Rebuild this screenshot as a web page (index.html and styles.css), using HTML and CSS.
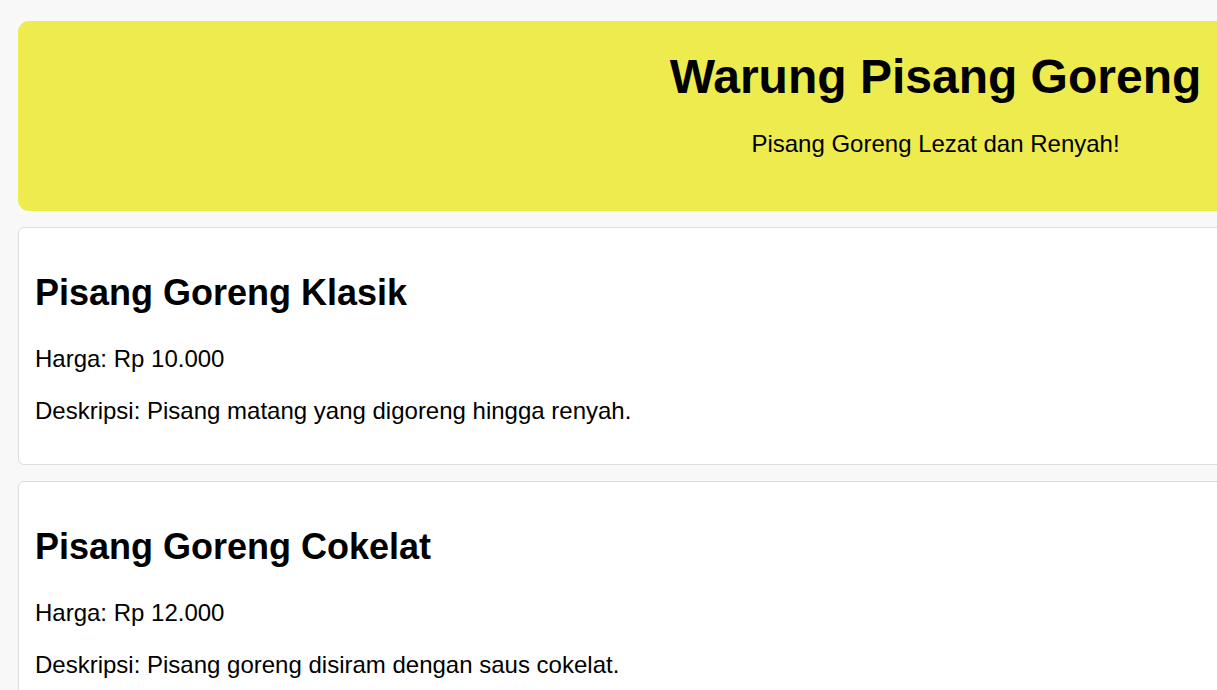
FILE: index.html
```html
<!DOCTYPE html>
<html lang="id">
<head>
<meta charset="utf-8">
<title>Warung Pisang Goreng</title>
<link rel="stylesheet" href="styles.css">
</head>
<body>
<div class="page">
  <header class="hero">
    <h1 class="hero-title">Warung Pisang Goreng</h1>
    <p class="hero-sub">Pisang Goreng Lezat dan Renyah!</p>
  </header>
  <section class="menu">
    <article class="card">
      <h2 class="card-title">Pisang Goreng Klasik</h2>
      <p class="card-text">Harga: Rp 10.000</p>
      <p class="card-text">Deskripsi: Pisang matang yang digoreng hingga renyah.</p>
    </article>
    <article class="card">
      <h2 class="card-title">Pisang Goreng Cokelat</h2>
      <p class="card-text">Harga: Rp 12.000</p>
      <p class="card-text">Deskripsi: Pisang goreng disiram dengan saus cokelat.</p>
    </article>
  </section>
</div>
</body>
</html>
```
FILE: styles.css
```css
html, body {
  margin: 0;
  padding: 0;
}
body {
  background: #f8f8f8;
  font-family: "Liberation Sans", Arial, sans-serif;
  color: #000;
  font-size: 24px;
}
.page {
  width: 1835px;
  padding: 21px 18px;
  display: flex;
  flex-direction: column;
  gap: 16px;
}
.hero {
  background: #edeb4d;
  border-radius: 11px;
  text-align: center;
  padding: 28px 0 29px;
}
.hero-title {
  margin: 0;
  font-size: 48px;
  font-weight: bold;
}
.hero-sub {
  margin: 26px 0 24px;
  font-size: 24px;
}
.menu {
  display: flex;
  flex-direction: column;
  gap: 16px;
}
.card {
  background: #fff;
  border: 1px solid #dcdcdc;
  border-radius: 6px;
  padding: 15px 16px;
}
.card-title {
  font-size: 36px;
  font-weight: bold;
  margin: 29px 0 31px;
}
.card-text {
  margin: 24px 0;
  font-size: 24px;
}
```
